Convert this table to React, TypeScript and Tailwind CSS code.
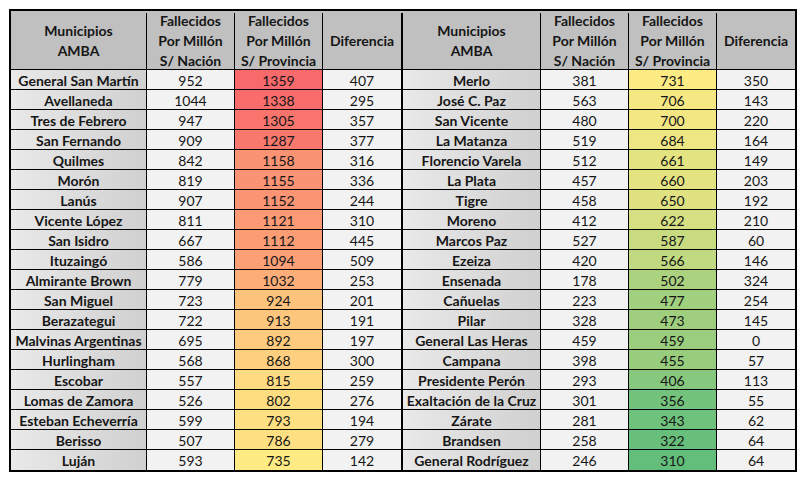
const left: [string, number, number, number][] = [
  ['General San Martín', 952, 1359, 407],
  ['Avellaneda', 1044, 1338, 295],
  ['Tres de Febrero', 947, 1305, 357],
  ['San Fernando', 909, 1287, 377],
  ['Quilmes', 842, 1158, 316],
  ['Morón', 819, 1155, 336],
  ['Lanús', 907, 1152, 244],
  ['Vicente López', 811, 1121, 310],
  ['San Isidro', 667, 1112, 445],
  ['Ituzaingó', 586, 1094, 509],
  ['Almirante Brown', 779, 1032, 253],
  ['San Miguel', 723, 924, 201],
  ['Berazategui', 722, 913, 191],
  ['Malvinas Argentinas', 695, 892, 197],
  ['Hurlingham', 568, 868, 300],
  ['Escobar', 557, 815, 259],
  ['Lomas de Zamora', 526, 802, 276],
  ['Esteban Echeverría', 599, 793, 194],
  ['Berisso', 507, 786, 279],
  ['Luján', 593, 735, 142],
]

const right: [string, number, number, number][] = [
  ['Merlo', 381, 731, 350],
  ['José C. Paz', 563, 706, 143],
  ['San Vicente', 480, 700, 220],
  ['La Matanza', 519, 684, 164],
  ['Florencio Varela', 512, 661, 149],
  ['La Plata', 457, 660, 203],
  ['Tigre', 458, 650, 192],
  ['Moreno', 412, 622, 210],
  ['Marcos Paz', 527, 587, 60],
  ['Ezeiza', 420, 566, 146],
  ['Ensenada', 178, 502, 324],
  ['Cañuelas', 223, 477, 254],
  ['Pilar', 328, 473, 145],
  ['General Las Heras', 459, 459, 0],
  ['Campana', 398, 455, 57],
  ['Presidente Perón', 293, 406, 113],
  ['Exaltación de la Cruz', 301, 356, 55],
  ['Zárate', 281, 343, 62],
  ['Brandsen', 258, 322, 64],
  ['General Rodríguez', 246, 310, 64],
]

// excel-style 3 colour scale: green (min) / yellow (median) / red (max)
const MIN = 310
const MID = 733
const MAX = 1359
const RED = [248, 105, 107]
const YEL = [255, 235, 132]
const GRN = [99, 190, 123]

function heat(v: number) {
  const hi = v >= MID
  const t = hi ? (v - MID) / (MAX - MID) : (MID - v) / (MID - MIN)
  const end = hi ? RED : GRN
  const c = YEL.map((y, i) => Math.round(y + t * (end[i] - y)))
  return `rgb(${c[0]},${c[1]},${c[2]})`
}

function Half({ rows, nameW, difW, sep }: { rows: [string, number, number, number][]; nameW: string; difW: string; sep: boolean }) {
  const difBorder = sep ? 'border-r-2' : ''
  return (
    <div className="flex flex-col">
      <div className="flex h-[59px] border-b border-black bg-[#c0c0c0] pt-[2px] font-bold leading-5">
        <div className={`${nameW} flex items-center justify-center border-r border-black text-center`}>
          Municipios
          <br />
          AMBA
        </div>
        <div className="flex w-[88px] items-center justify-center border-r border-black text-center">
          Fallecidos
          <br />
          Por Millón
          <br />
          S/ Nación
        </div>
        <div className="flex w-[88px] items-center justify-center border-r border-black text-center">
          Fallecidos
          <br />
          Por Millón
          <br />
          S/ Provincia
        </div>
        <div className={`${difW} ${difBorder} flex items-center justify-center border-black`}>Diferencia</div>
      </div>
      {rows.map(([name, nac, prov, dif], i) => (
        <div key={name} className={`flex h-5 leading-[21px] ${i < rows.length - 1 ? 'border-b border-black' : ''}`}>
          <div className={`${nameW} border-r border-black bg-gradient-to-r from-[#e9e9e9] to-[#d0d0d0] text-center font-bold`}>
            {name}
          </div>
          <div className="w-[88px] border-r border-black bg-[#f2f2f2] text-center">{nac}</div>
          <div className="w-[88px] border-r border-black text-center" style={{ backgroundColor: heat(prov) }}>
            {prov}
          </div>
          <div className={`${difW} ${difBorder} border-black bg-[#f2f2f2] text-center`}>{dif}</div>
        </div>
      ))}
    </div>
  )
}

export default function App() {
  return (
    <div className="h-[482px] w-[807px] bg-white pl-[9px] pt-[9px] font-['Lato',sans-serif] text-[14px] text-[#161616]">
      <div className="flex w-fit border-2 border-black">
        <Half rows={left} nameW="w-[136px]" difW="w-[80px]" sep />
        <Half rows={right} nameW="w-[138px]" difW="w-[78px]" sep={false} />
      </div>
    </div>
  )
}
